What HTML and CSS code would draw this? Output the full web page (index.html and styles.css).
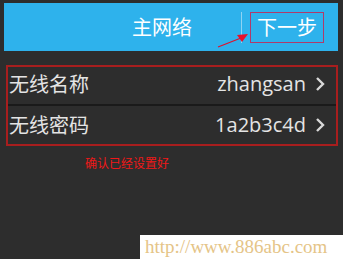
FILE: index.html
```html
<!DOCTYPE html>
<html lang="zh">
<head>
<meta charset="utf-8">
<link rel="stylesheet" href="styles.css">
</head>
<body>
<div class="screen">
  <header class="topbar">
    <span class="title">主网络</span>
    <span class="sep"></span>
    <span class="next">下一步</span>
    <svg class="arrow" width="40" height="20" viewBox="0 0 40 20">
      <line x1="2" y1="17" x2="25" y2="8" stroke="#e0102a" stroke-width="1.2"/>
      <polygon points="21,5 32,4 26,12" fill="#e8102a"/>
    </svg>
  </header>
  <section class="list">
    <div class="row first">
      <span class="label">无线名称</span>
      <span class="value">zhangsan</span>
      <svg class="chev" width="12" height="16" viewBox="0 0 12 16"><polyline points="3,2 9,8 3,14" fill="none" stroke="#d8d8d8" stroke-width="2.4"/></svg>
    </div>
    <div class="row">
      <span class="label">无线密码</span>
      <span class="value">1a2b3c4d</span>
      <svg class="chev" width="12" height="16" viewBox="0 0 12 16"><polyline points="3,2 9,8 3,14" fill="none" stroke="#d8d8d8" stroke-width="2.4"/></svg>
    </div>
  </section>
  <p class="note">确认已经设置好</p>
  <div class="watermark">http://www.886abc.com</div>
</div>
</body>
</html>
```
FILE: styles.css
```css
* { box-sizing: border-box; }
html, body { margin: 0; padding: 0; }
body { background: #2b2b2b; width: 343px; height: 259px; overflow: hidden; }
.screen {
  position: relative;
  width: 343px;
  height: 259px;
  padding: 3px 5px 0 4px;
  background: #2d2d2d;
  font-family: "Noto Sans CJK SC", sans-serif;
}
.topbar {
  position: relative;
  height: 48px;
  background: #2eb2ec;
  display: flex;
  align-items: center;
  padding-left: 128px;
  color: #fff;
  font-size: 20px;
}
.title { width: 62px; line-height: 1; }
.sep { width: 1px; height: 31px; background: #8fd3f3; margin-left: 47px; }
.next {
  margin-left: 8px;
  width: 74px;
  height: 31px;
  border: 1px solid #b03a6a;
  display: flex;
  align-items: center;
  justify-content: center;
  line-height: 1;
}
.arrow { position: absolute; left: 212px; top: 27px; }
.list {
  margin: 14px 0 0 2px;
  border: 2px solid #a81e1e;
  width: 332px;
}
.row {
  display: flex;
  align-items: center;
  height: 37px;
  padding: 0 10px 0 1px;
  color: #e4e4e4;
  font-size: 20px;
}
.row.first { padding-bottom: 3px; }
.row + .row { border-top: 2px solid #1a1a1a; height: 40px; }
.label { flex: 1; line-height: 1; }
.value { font-family: "Open Sans", sans-serif; line-height: 1; margin-right: 8px; }
.chev { display: block; }
.note {
  margin: 10px 0 0 81px;
  color: #f01818;
  font-size: 12px;
  line-height: 14px;
}
.watermark {
  position: absolute;
  left: 140px;
  top: 235px;
  width: 203px;
  height: 24px;
  background: #fff;
  color: #e5c487;
  font-family: "Liberation Serif", serif;
  font-size: 19px;
  line-height: 24px;
  padding-left: 5px;
}
```
